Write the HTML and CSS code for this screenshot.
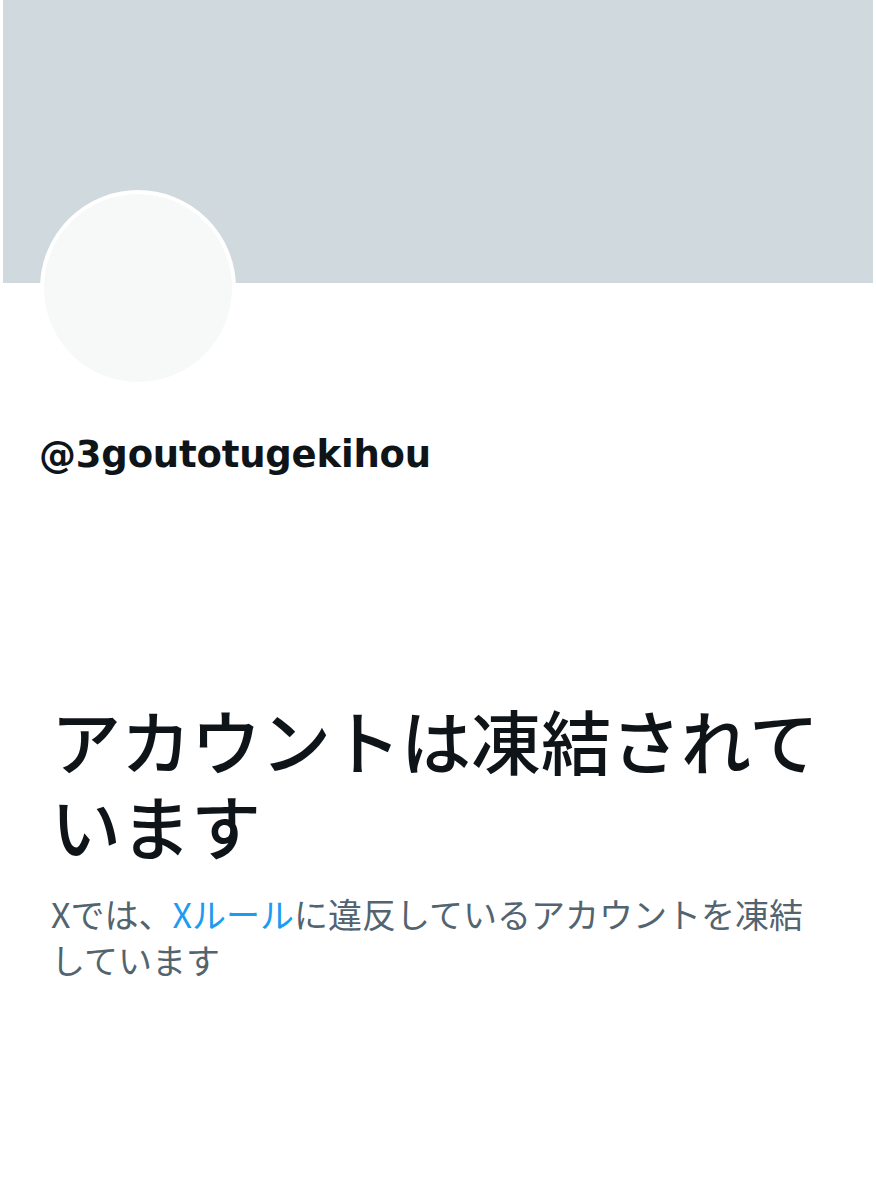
FILE: index.html
```html
<!DOCTYPE html>
<html lang="ja">
<head>
    <meta charset="UTF-8">
    <meta name="viewport" content="width=device-width, initial-scale=1.0">
    <title>@3goutotugekihou</title>
    <link rel="stylesheet" href="styles.css">
</head>
<body>
    <div class="profile">
        <div class="banner"></div>
        <div class="avatar"></div>
        <div class="handle">@3goutotugekihou</div>
    </div>

    <div class="notice">
        <h1>アカウントは凍結されています</h1>
        <p>Xでは、<a href="#">Xルール</a>に違反しているアカウントを凍結しています</p>
    </div>
</body>
</html>
```

FILE: styles.css
```css
body {
    margin: 0;
    background-color: #fff;
    font-family: "Liberation Sans", "Noto Sans CJK JP", sans-serif;
    color: #0f1419;
}

.banner {
    height: 283px;
    margin: 0 3px;
    background-color: #cfd9de;
}

.avatar {
    width: 188px;
    height: 188px;
    margin: -93px 0 0 40px;
    border: 4px solid #fff;
    border-radius: 50%;
    background-color: #f7f9f9;
}

.handle {
    margin: 45px 0 0 39px;
    font-family: "DejaVu Sans", sans-serif;
    font-size: 37px;
    font-weight: bold;
    letter-spacing: -0.2px;
    line-height: 48px;
}

.notice {
    width: 776px;
    margin: 218px 0 0 51px;
}

.notice h1 {
    margin: 0;
    font-family: "Noto Sans CJK JP", sans-serif;
    font-size: 70px;
    font-weight: 500;
    line-height: 85px;
}

.notice p {
    margin: 24px 0 0;
    font-family: "Noto Sans CJK JP", sans-serif;
    font-size: 34px;
    line-height: 46px;
    color: #536471;
}

.notice a {
    color: #1d9bf0;
    text-decoration: none;
}
```
